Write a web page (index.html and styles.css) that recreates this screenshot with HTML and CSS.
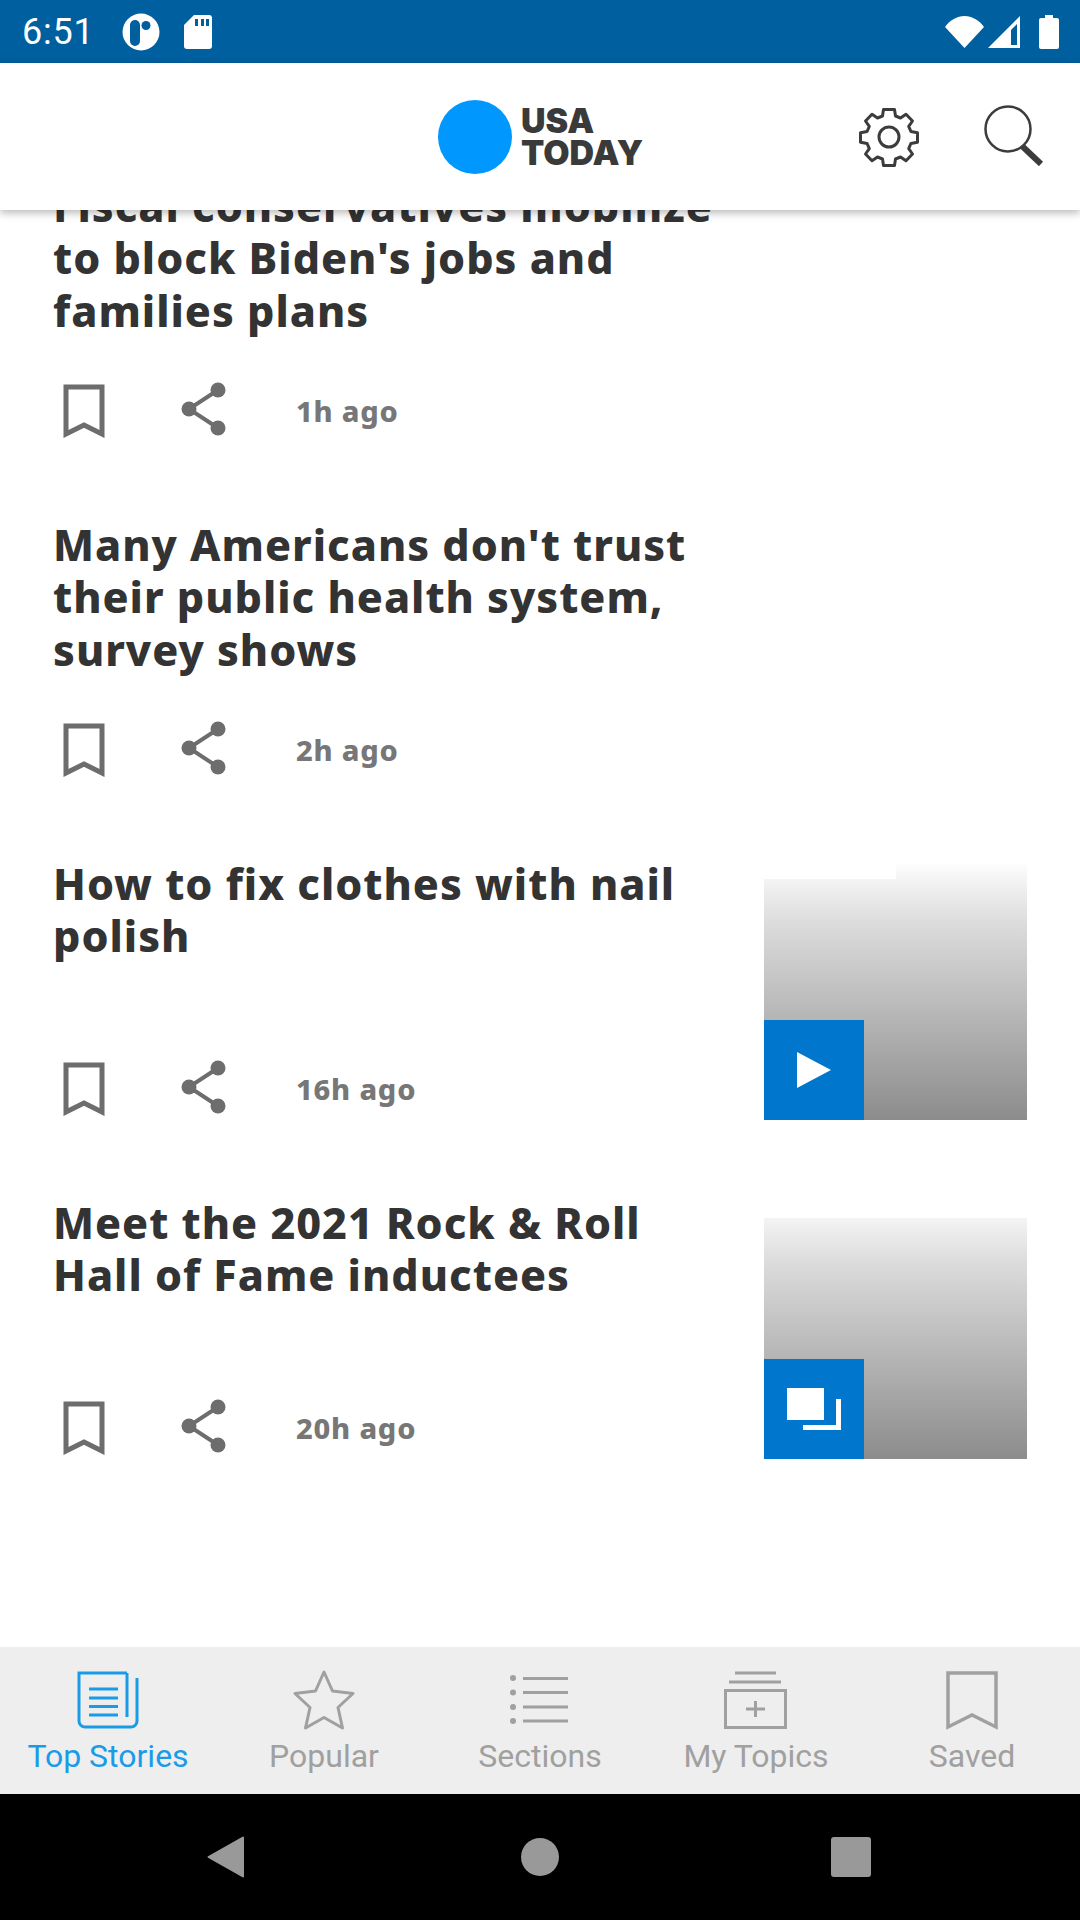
FILE: index.html
```html
<!DOCTYPE html>
<html lang="en">
<head>
  <meta charset="UTF-8" />
  <title>USA TODAY</title>
  <link rel="stylesheet" href="styles.css">
</head>
<body>
  <div class="status-bar">
    <span class="time">6:51</span>
    <svg class="status-app" width="38" height="38" viewBox="0 0 38 38">
      <circle cx="19" cy="19" r="18.500" fill="#fff"/>
      <rect x="8" y="7" width="10" height="26" rx="5" fill="#005f9e"/>
      <circle cx="24" cy="12.500" r="4.500" fill="#005f9e"/>
    </svg>
    <svg class="status-sd" width="28" height="34" viewBox="0 0 28 34">
      <path d="M10 0H25a3 3 0 0 1 3 3V31a3 3 0 0 1-3 3H3a3 3 0 0 1-3-3V10z" fill="#fff"/>
      <path d="M11 4h3v7h-3zM17 4h3v7h-3zM22 4h3v7h-3z" fill="#005f9e"/>
    </svg>
    <span class="status-right">
      <svg width="39" height="32" viewBox="0 0 39 32"><path d="M0 11C5 4 12 0 19.500 0S34 4 39 11L19.500 32z" fill="#fff"/></svg>
      <svg width="32" height="32" viewBox="0 0 32 32"><path fill-rule="evenodd" d="M32 0V32H0zM29 8L23 14V29H29z" fill="#fff"/></svg>
      <svg class="battery" width="20" height="34" viewBox="0 0 20 34"><path d="M6 0h8v3h4a2 2 0 0 1 2 2V32a2 2 0 0 1-2 2H2a2 2 0 0 1-2-2V5a2 2 0 0 1 2-2h4z" fill="#fff"/></svg>
    </span>
  </div>

  <header class="app-header">
    <div class="logo">
      <span class="logo-dot"></span>
      <span class="logo-text">USA<br>TODAY</span>
    </div>
    <svg class="gear" width="60" height="60" viewBox="0 0 60 60" fill="none" stroke="#3c3c3c" stroke-width="3" stroke-linejoin="round">
      <circle cx="30" cy="30" r="10"/>
      <path d="M24.500 2.500h11l1 6.500 5 2 5.500-3.800 6.500 6.800-3.800 5.300 2.200 5.200 6.600 1.200v9.600l-6.600 1.200-2.200 5.200 3.800 5.300-6.500 6.800-5.500-3.800-5 2-1 6.500h-11l-1-6.500-5-2-5.500 3.800-6.500-6.800 3.800-5.300-2.200-5.200-6.600-1.200v-9.600l6.600-1.200 2.200-5.200-3.800-5.300 6.500-6.800 5.500 3.800 5-2z"/>
    </svg>
    <svg class="search" width="60" height="61" viewBox="0 0 60 61" fill="none" stroke="#3c3c3c">
      <circle cx="24" cy="24" r="22.500" stroke-width="2.500"/>
      <path d="M38 41L57 59" stroke-width="6"/>
    </svg>
  </header>

  <main class="stories">
    <article class="story">
      <div class="story-text">
        <h2>Fiscal conservatives mobilize to block Biden's jobs and families plans</h2>
        <div class="actions">
          <svg class="bookmark" width="42" height="54" viewBox="0 0 42 54"><path d="M3 3H39V50L21 41 3 50z"/></svg>
          <svg class="share" width="50" height="54" viewBox="0 0 50 54"><path d="M38 8L9 27 38 46" fill="none" stroke="#6d6d6d" stroke-width="4"/><circle cx="38" cy="8" r="7.500"/><circle cx="9" cy="27" r="7.500"/><circle cx="38" cy="46" r="7.500"/></svg>
          <span class="age">1h ago</span>
        </div>
      </div>
    </article>
    <article class="story">
      <div class="story-text">
        <h2>Many Americans don't trust their public health system, survey shows</h2>
        <div class="actions">
          <svg class="bookmark" width="42" height="54" viewBox="0 0 42 54"><path d="M3 3H39V50L21 41 3 50z"/></svg>
          <svg class="share" width="50" height="54" viewBox="0 0 50 54"><path d="M38 8L9 27 38 46" fill="none" stroke="#6d6d6d" stroke-width="4"/><circle cx="38" cy="8" r="7.500"/><circle cx="9" cy="27" r="7.500"/><circle cx="38" cy="46" r="7.500"/></svg>
          <span class="age">2h ago</span>
        </div>
      </div>
    </article>
    <article class="story">
      <div class="story-text">
        <h2>How to fix clothes with nail polish</h2>
        <div class="actions">
          <svg class="bookmark" width="42" height="54" viewBox="0 0 42 54"><path d="M3 3H39V50L21 41 3 50z"/></svg>
          <svg class="share" width="50" height="54" viewBox="0 0 50 54"><path d="M38 8L9 27 38 46" fill="none" stroke="#6d6d6d" stroke-width="4"/><circle cx="38" cy="8" r="7.500"/><circle cx="9" cy="27" r="7.500"/><circle cx="38" cy="46" r="7.500"/></svg>
          <span class="age">16h ago</span>
        </div>
      </div>
      <div class="thumb thumb-notch">
        <span class="thumb-badge">
          <svg width="34" height="36" viewBox="0 0 34 36"><path d="M0 0L34 18 0 36z" fill="#fff"/></svg>
        </span>
      </div>
    </article>
    <article class="story">
      <div class="story-text">
        <h2>Meet the 2021 Rock &amp; Roll Hall of Fame inductees</h2>
        <div class="actions">
          <svg class="bookmark" width="42" height="54" viewBox="0 0 42 54"><path d="M3 3H39V50L21 41 3 50z"/></svg>
          <svg class="share" width="50" height="54" viewBox="0 0 50 54"><path d="M38 8L9 27 38 46" fill="none" stroke="#6d6d6d" stroke-width="4"/><circle cx="38" cy="8" r="7.500"/><circle cx="9" cy="27" r="7.500"/><circle cx="38" cy="46" r="7.500"/></svg>
          <span class="age">20h ago</span>
        </div>
      </div>
      <div class="thumb">
        <span class="thumb-badge">
          <svg width="54" height="42" viewBox="0 0 54 42"><rect x="0" y="0" width="37" height="32" fill="#fff"/><path d="M42 11H54V42H16V37H49V11z" fill="#fff"/></svg>
        </span>
      </div>
    </article>
  </main>

  <nav class="tab-bar">
    <div class="tab active">
      <svg width="62" height="58" viewBox="0 0 62 58" fill="none" stroke="#1a9be8">
        <path d="M50 2H2V50a6 6 0 0 0 6 6H54a6 6 0 0 0 6-6V7" stroke-width="3"/>
        <path d="M50 2V46" stroke-width="3"/>
        <path d="M12 18H41M12 27H41M12 35.500H41M12 44H41" stroke-width="3"/>
      </svg>
      <span>Top Stories</span>
    </div>
    <div class="tab">
      <svg width="62" height="60" viewBox="0 0 62 60" fill="none" stroke="#a0a0a0" stroke-width="3" stroke-linejoin="round">
        <path d="M31 2L39.500 21 60 23.500 45 37.500 49.500 58 31 47.500 12.500 58 17 37.500 2 23.500 22.500 21z"/>
      </svg>
      <span>Popular</span>
    </div>
    <div class="tab">
      <svg width="62" height="58" viewBox="0 0 62 58" fill="#a0a0a0">
        <circle cx="4" cy="7" r="3"/><circle cx="4" cy="21.500" r="3"/><circle cx="4" cy="36" r="3"/><circle cx="4" cy="50" r="3"/>
        <path d="M14 6H59V9H14zM14 20H59V23H14zM14 34.500H59V37.500H14zM14 48.500H59V51.500H14z"/>
      </svg>
      <span>Sections</span>
    </div>
    <div class="tab">
      <svg width="64" height="58" viewBox="0 0 64 58" fill="none" stroke="#a0a0a0" stroke-width="3">
        <path d="M11 2H52M5 11H57"/>
        <rect x="1.500" y="19.500" width="60" height="37"/>
        <path d="M31.500 30V46M22 38H41"/>
      </svg>
      <span>My Topics</span>
    </div>
    <div class="tab">
      <svg width="52" height="58" viewBox="0 0 52 58" fill="none" stroke="#a0a0a0" stroke-width="3.500">
        <path d="M2 2H50V56L26 44 2 56z"/>
      </svg>
      <span>Saved</span>
    </div>
  </nav>

  <div class="nav-bar">
    <svg width="38" height="42" viewBox="0 0 38 42"><path d="M36 1.500V40.500L1.500 21z" fill="#999" stroke="#999" stroke-width="2" stroke-linejoin="round"/></svg>
    <span class="nav-home"></span>
    <span class="nav-recent"></span>
  </div>
</body>
</html>
```

FILE: styles.css
```css
:root {
  --status: #005f9e;
  --ink: #333;
  --muted: #777;
  --tab-grey: #a0a0a0;
  --blue: #0077cc;
}

* {
  box-sizing: border-box;
}

body {
  margin: 0;
  width: 1080px;
  height: 1920px;
  display: flex;
  flex-direction: column;
  background: #fff;
  font-family: 'Noto Sans', 'Liberation Sans', sans-serif;
  overflow: hidden;
}

/* status bar */
.status-bar {
  height: 63px;
  flex: none;
  display: flex;
  align-items: center;
  padding: 0 21px 0 22px;
  background: var(--status);
  color: #fff;
}

.time {
  font-family: Roboto, sans-serif;
  font-size: 36px;
  letter-spacing: 0.8px;
  width: 100px;
}

.status-sd {
  margin-left: 24px;
}

.status-right {
  margin-left: auto;
  display: flex;
  align-items: center;
  gap: 4px;
}

.status-right .battery {
  margin-left: 15px;
}

/* header */
.app-header {
  height: 147px;
  flex: none;
  display: flex;
  align-items: center;
  padding-right: 36px;
  background: #fff;
  box-shadow: 0 3px 8px rgba(0,0,0,0.28);
  position: relative;
  z-index: 2;
}

.logo {
  display: flex;
  align-items: center;
  gap: 9px;
  margin-left: 438px;
}

.logo-dot {
  width: 74px;
  height: 74px;
  border-radius: 50%;
  background: #0098ff;
}

.logo-text {
  font-family: Inter, sans-serif;
  font-size: 34px;
  font-weight: 900;
  line-height: 32px;
  color: #3a3a3a;
}

.gear {
  margin-left: auto;
}

.search {
  margin-left: 65px;
  margin-top: -3px;
}

/* story list */
.stories {
  flex: 1;
  min-height: 0;
  overflow: hidden;
  margin-top: -30px;
}

.story {
  height: 339px;
  display: flex;
  justify-content: space-between;
  padding: 0 53px;
}

.story-text {
  width: 672px;
}

.story h2 {
  margin: 0;
  height: 157px;
  font-size: 43px;
  font-weight: 800;
  letter-spacing: 1px;
  line-height: 52.400px;
  color: var(--ink);
}

.actions {
  display: flex;
  align-items: center;
  margin-top: 45px;
  padding-left: 10px;
}

.bookmark {
  fill: none;
  stroke: #6d6d6d;
  stroke-width: 5;
}

.share {
  margin: 0 0 4px 75px;
  fill: #6d6d6d;
}

.age {
  margin: 0 0 2px 66px;
  font-size: 29px;
  font-weight: 800;
  letter-spacing: 0.8px;
  color: var(--muted);
}

.thumb {
  width: 263px;
  height: 241px;
  margin-top: 21px;
  position: relative;
  background: linear-gradient(#f4f4f4, #dcdcdc 18%, #8c8c8c);
}

.thumb-notch::before {
  content: '';
  position: absolute;
  left: 132px;
  right: 0;
  top: -15px;
  height: 15px;
  background: linear-gradient(#fdfdfd, #f4f4f4);
}

.thumb-badge {
  position: absolute;
  left: 0;
  bottom: 0;
  width: 100px;
  height: 100px;
  display: flex;
  align-items: center;
  justify-content: center;
  background: var(--blue);
}

/* tabs */
.tab-bar {
  height: 147px;
  flex: none;
  display: flex;
  background: #eee;
}

.tab {
  flex: 1;
  display: flex;
  flex-direction: column;
  align-items: center;
  padding-top: 23px;
  color: var(--tab-grey);
}

.tab svg {
  height: 60px;
  flex: none;
}

.tab span {
  font-family: Roboto, sans-serif;
  font-size: 32px;
  line-height: 36px;
  margin-top: 8px;
}

.tab.active {
  color: #1a9be8;
}

/* android nav */
.nav-bar {
  height: 126px;
  flex: none;
  display: flex;
  align-items: center;
  background: #000;
  padding-left: 207px;
}

.nav-home {
  width: 38px;
  height: 38px;
  margin-left: 276px;
  border-radius: 50%;
  background: #999;
}

.nav-recent {
  width: 40px;
  height: 40px;
  margin-left: 272px;
  border-radius: 3px;
  background: #999;
}
```
